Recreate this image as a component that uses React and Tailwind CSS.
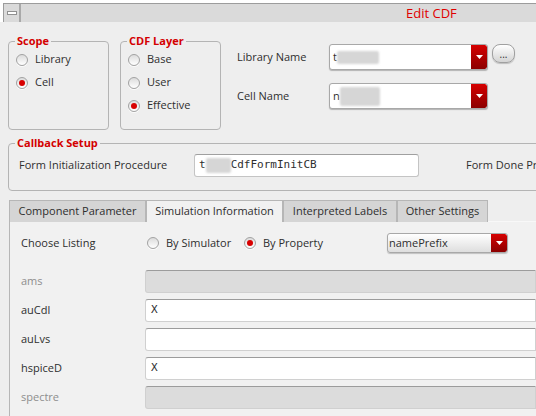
import React from 'react';

const Radio = ({ checked }) => (
  <span className="flex h-[12px] w-[12px] shrink-0 items-center justify-center rounded-full border border-[#a2a2a2] bg-linear-to-b from-[#dcdcdc] to-white shadow-[0_1px_0_rgba(255,255,255,0.8)]">
    {checked && <span className="h-[6px] w-[6px] rounded-full bg-[#d80000]" />}
  </span>
);

const RadioItem = ({ label, checked, className = '' }) => (
  <div className={`flex items-center gap-[7px] ${className}`}>
    <Radio checked={checked} />
    <span>{label}</span>
  </div>
);

const RedArrow = () => (
  <span className="flex w-[16px] shrink-0 items-center justify-center self-stretch rounded-r-[2px] bg-linear-to-b from-[#d60000] to-[#8c0000]">
    <svg width="7" height="4" viewBox="0 0 7 4">
      <path d="M0 0h7L3.5 4z" fill="white" />
    </svg>
  </span>
);

const Blur = ({ w, h }) => (
  <span className="inline-block rounded-[2px] bg-[#d6d6d6] blur-[1px]" style={{ width: w, height: h }} />
);

const GroupBox = ({ title, className = '', children }) => (
  <fieldset className={`rounded-[4px] border border-[#b4b4b4] ${className}`}>
    <legend className="ml-[6px] px-[2px] text-[11px] font-bold leading-[14px] text-[#d40000]">{title}</legend>
    {children}
  </fieldset>
);

const Field = ({ value, disabled }) => (
  <div
    className={`flex h-[23px] w-[420px] items-center rounded-l-[3px] border border-[#d0d0d0] border-t-[#9c9c9c] pl-[5px] font-['DejaVu_Sans_Mono'] text-[11px] ${
      disabled ? 'bg-[#dcdcdc]' : 'bg-white'
    }`}
  >
    {value}
  </div>
);

const rows = [
  { name: 'ams', disabled: true },
  { name: 'auCdl', value: 'X' },
  { name: 'auLvs', value: '' },
  { name: 'hspiceD', value: 'X' },
  { name: 'spectre', disabled: true },
];

const tabs = [
  { label: 'Component Parameter', w: 'w-[137px]' },
  { label: 'Simulation Information', w: 'w-[137px]', active: true },
  { label: 'Interpreted Labels', w: 'w-[114px]' },
  { label: 'Other Settings', w: 'w-[91px]' },
];

export default function App() {
  return (
    <div className="h-[416px] w-[536px] overflow-hidden bg-[#eeeeee] font-['Open_Sans'] text-[11px] text-[#2e2e2e]">
      {/* title bar */}
      <div className="flex h-[22px] bg-white pl-[3px] pt-[3px]">
        <div className="flex flex-1 border-l border-t border-[#9c9c9c] bg-[#dadada]">
          <div className="flex w-[17px] items-center justify-center border-r-2 border-[#a9a9a9]">
            <span className="h-[4px] w-[10px] border border-[#909090] bg-white" />
          </div>
          <div className="pl-[385px] text-[13px] leading-[18px] text-[#e00000]">Edit CDF</div>
        </div>
      </div>

      <div className="pl-[8px]">
        <div className="flex items-start">
          <GroupBox title="Scope" className="mt-[12px] h-[96px] w-[101px] shrink-0">
            <RadioItem label="Library" className="h-[23px] pl-[7px]" />
            <RadioItem label="Cell" checked className="h-[23px] pl-[7px]" />
          </GroupBox>
          <GroupBox title="CDF Layer" className="ml-[11px] mt-[12px] h-[96px] w-[101px] shrink-0">
            <RadioItem label="Base" className="h-[23px] pl-[7px]" />
            <RadioItem label="User" className="h-[23px] pl-[7px]" />
            <RadioItem label="Effective" checked className="h-[23px] pl-[7px]" />
          </GroupBox>

          <div className="ml-[16px] mt-[22px] flex flex-col gap-[13px]">
            <div className="flex items-center">
              <span className="w-[92px]">Library Name</span>
              <div className="flex h-[26px] w-[159px] overflow-hidden rounded-[3px] border border-[#a8a8a8] bg-white shadow-[0_1px_1px_rgba(0,0,0,0.25)]">
                <div className="flex flex-1 items-center pl-[3px]">
                  <span>t</span>
                  <Blur w={42} h={13} />
                </div>
                <RedArrow />
              </div>
              <button className="ml-[4px] h-[19px] w-[23px] self-start rounded-[8px] border border-[#a0a0a0] bg-linear-to-b from-white to-[#d4d4d4] text-[10px] leading-[12px] shadow-[0_1px_1px_rgba(0,0,0,0.2)]">
                ...
              </button>
            </div>
            <div className="flex items-center">
              <span className="w-[92px]">Cell Name</span>
              <div className="flex h-[26px] w-[159px] overflow-hidden rounded-[3px] border border-[#a8a8a8] bg-white shadow-[0_1px_1px_rgba(0,0,0,0.25)]">
                <div className="flex flex-1 items-center pl-[3px]">
                  <span>n</span>
                  <Blur w={40} h={19} />
                </div>
                <RedArrow />
              </div>
            </div>
          </div>
        </div>

        <GroupBox title="Callback Setup" className="mt-[6px] w-[640px] pb-[13px]">
          <div className="flex items-center pl-[10px] pt-[4px]">
            <span className="w-[175px]">Form Initialization Procedure</span>
            <div className="flex h-[23px] w-[225px] items-center rounded-[3px] border border-[#c4c4c4] border-t-[#a0a0a0] bg-white pl-[4px] font-['DejaVu_Sans_Mono']">
              <span>t</span>
              <Blur w={25} h={15} />
              <span>CdfFormInitCB</span>
            </div>
            <span className="ml-[47px]">Form Done Procedure</span>
          </div>
        </GroupBox>

        {/* tabs */}
        <div className="ml-[1px] mt-[9px] flex h-[22px]">
          {tabs.map((t) => (
            <div
              key={t.label}
              className={`flex ${t.w} items-center justify-center border border-b-0 border-[#b6b6b6] ${
                t.active ? 'bg-[#f1f1f1]' : 'bg-[#d5d5d5]'
              }`}
            >
              {t.label}
            </div>
          ))}
          <div className="flex-1 border-b border-[#f8f8f8]" />
        </div>

        <div className="ml-[1px] h-[200px] border-l border-[#b6b6b6] bg-[#f1f1f1] pl-[11px] pt-[11px]">
          <div className="flex h-[20px] items-center">
            <span className="w-[126px]">Choose Listing</span>
            <RadioItem label="By Simulator" className="w-[97px] gap-[6px]" />
            <RadioItem label="By Property" checked className="w-[143px] gap-[5px]" />
            <div className="flex h-[20px] w-[121px] overflow-hidden rounded-[3px] border border-[#a8a8a8] bg-linear-to-b from-white to-[#dedede] shadow-[0_1px_1px_rgba(0,0,0,0.2)]">
              <span className="flex flex-1 items-center pl-[1px]">namePrefix</span>
              <RedArrow />
            </div>
          </div>

          <div className="mt-[17px] flex flex-col gap-[6px]">
            {rows.map((r) => (
              <div key={r.name} className="flex items-center">
                <span className={`w-[124px] shrink-0 ${r.disabled ? 'text-[#8e8e8e]' : ''}`}>{r.name}</span>
                <Field value={r.value} disabled={r.disabled} />
              </div>
            ))}
          </div>
        </div>
      </div>
    </div>
  );
}
